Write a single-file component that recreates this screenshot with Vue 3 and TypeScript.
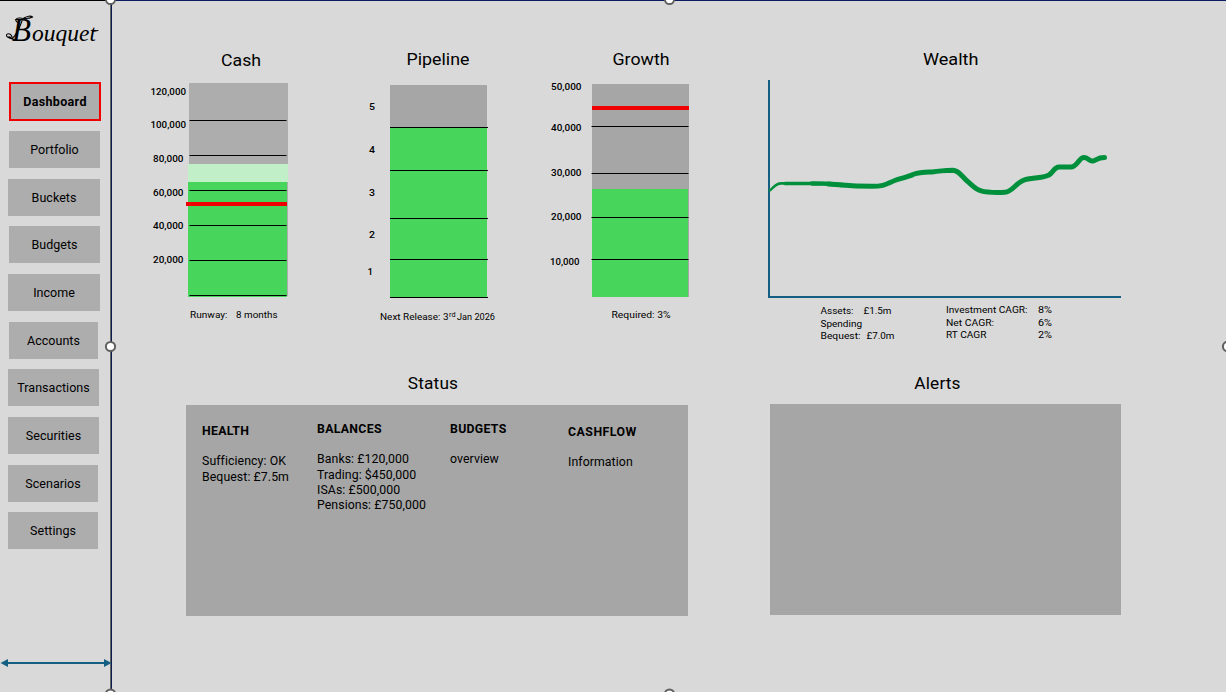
<script setup lang="ts">
interface Label { text: string; x: number; y: number; w: number }
interface Column { title: string; lines: string[]; name: string }

const nav: { label: string; size: string }[] = [
  { label: 'Portfolio', size: 'inset' },
  { label: 'Buckets', size: 'wide' },
  { label: 'Budgets', size: 'inset' },
  { label: 'Income', size: 'wide' },
  { label: 'Accounts', size: 'short' },
  { label: 'Transactions', size: 'mid' },
  { label: 'Securities', size: 'mid' },
  { label: 'Scenarios', size: 'base' },
  { label: 'Settings', size: 'base' },
]

const cashLabels: Label[] = [
  { text: '120,000', x: 150.5, y: 95, w: 35.5 },
  { text: '100,000', x: 150.5, y: 128, w: 35.5 },
  { text: '80,000', x: 153, y: 162, w: 30.5 },
  { text: '60,000', x: 153, y: 196, w: 30.5 },
  { text: '40,000', x: 153, y: 229, w: 30.5 },
  { text: '20,000', x: 153, y: 263, w: 30.5 },
]
const cashLines: number[] = [120, 155, 190, 225, 260, 295]

const pipelineLabels: Label[] = [
  { text: '5', x: 369, y: 110, w: 6 },
  { text: '4', x: 369, y: 153, w: 6 },
  { text: '3', x: 369, y: 196, w: 6 },
  { text: '2', x: 369, y: 238, w: 6 },
  { text: '1', x: 367.5, y: 275, w: 5.5 },
]
const pipelineLines: number[] = [127, 170, 218, 259, 297]

const growthLabels: Label[] = [
  { text: '50,000', x: 551, y: 90, w: 30.5 },
  { text: '40,000', x: 551, y: 131, w: 30.5 },
  { text: '30,000', x: 551, y: 176, w: 30.5 },
  { text: '20,000', x: 551, y: 220, w: 30.5 },
  { text: '10,000', x: 550, y: 265, w: 29.5 },
]
const growthLines: number[] = [126, 173, 217, 259]

const wealthNotes: Label[] = [
  { text: 'Assets:', x: 820.5, y: 314, w: 33 },
  { text: '£1.5m', x: 863.5, y: 314, w: 28 },
  { text: 'Spending', x: 820.5, y: 327, w: 41.5 },
  { text: 'Bequest:', x: 820.5, y: 339, w: 40 },
  { text: '£7.0m', x: 866.5, y: 339, w: 28 },
  { text: 'Investment CAGR:', x: 946, y: 313, w: 81.5 },
  { text: 'Net CAGR:', x: 946, y: 326, w: 48 },
  { text: 'RT CAGR', x: 946, y: 338, w: 40.5 },
  { text: '8%', x: 1038, y: 313, w: 14 },
  { text: '6%', x: 1038, y: 326, w: 14 },
  { text: '2%', x: 1038, y: 338, w: 14 },
]

const columns: Column[] = [
  { name: 'health', title: 'HEALTH', lines: ['Sufficiency: OK', 'Bequest: £7.5m'] },
  { name: 'balances', title: 'BALANCES', lines: ['Banks: £120,000', 'Trading: $450,000', 'ISAs: £500,000', 'Pensions: £750,000'] },
  { name: 'budgets', title: 'BUDGETS', lines: ['overview'] },
  { name: 'cashflow', title: 'CASHFLOW', lines: ['Information'] },
]

const handles: { x: number; y: number }[] = [
  { x: 110.5, y: -0.5 },
  { x: 669.5, y: -0.5 },
  { x: 110.5, y: 346.5 },
  { x: 1227.5, y: 346.5 },
  { x: 110.5, y: 694 },
  { x: 669.5, y: 694 },
]
</script>

<template>
  <div class="app">
    <aside class="sidebar">
      <svg class="logo" width="110" height="56" viewBox="0 0 110 56">
        <text class="script initial" x="12" y="40" textLength="19" lengthAdjust="spacingAndGlyphs">B</text>
        <text class="script" x="32" y="39.500" textLength="64" lengthAdjust="spacingAndGlyphs">ouquet</text>
        <path class="flourish" d="M18 21.500C14 20 16 16.500 20 17S28 18.500 32.500 16C31 14.500 27 15 24 17" />
        <path class="flourish" d="M16 39C11 37.500 6.500 37 6.500 34.500S10 32.500 11.500 34.500S9.500 37 9 35.500M12 37.500Q17 34 22 20" />
        <path class="flourish" d="M92.500 30.500L98 29.500" />
      </svg>
      <nav class="nav">
        <button class="item active">Dashboard</button>
        <button v-for="n in nav" :key="n.label" class="item" :class="n.size">{{ n.label }}</button>
      </nav>
      <svg class="extent" width="112" height="12" viewBox="0 0 112 12">
        <path d="M7 6H105" stroke="#156082" stroke-width="2" />
        <path d="M0.500 6L8 2V10ZM111.500 6L104 2V10Z" fill="#156082" />
      </svg>
    </aside>

    <main class="main">
      <div class="charts">
        <svg width="200" height="310" viewBox="140 40 200 310">
          <text class="title" x="221" y="66" textLength="40" lengthAdjust="spacingAndGlyphs">Cash</text>
          <rect x="189" y="83" width="99" height="213" fill="#adadad" />
          <rect x="188" y="164" width="100" height="18" fill="#c1f0c8" />
          <rect x="188" y="182" width="99" height="115" fill="#47d65b" />
          <rect v-for="y in cashLines" :key="y" x="189.500" :y="y" width="97" height="1" />
          <rect x="186" y="202" width="101" height="4" fill="#f00000" />
          <text v-for="l in cashLabels" :key="l.text" class="tick" :x="l.x" :y="l.y" :textLength="l.w" lengthAdjust="spacingAndGlyphs">{{ l.text }}</text>
          <text class="note" x="190" y="318" textLength="37.500" lengthAdjust="spacingAndGlyphs">Runway:</text>
          <text class="note" x="236" y="318" textLength="41.500" lengthAdjust="spacingAndGlyphs">8 months</text>
        </svg>

        <svg width="200" height="310" viewBox="340 40 200 310">
          <text class="title" x="406.500" y="65" textLength="63" lengthAdjust="spacingAndGlyphs">Pipeline</text>
          <rect x="390" y="85" width="97" height="42" fill="#a6a6a6" />
          <rect x="390" y="127" width="97" height="170" fill="#47d65b" />
          <rect v-for="y in pipelineLines" :key="y" x="390" :y="y" width="98" height="1" />
          <text v-for="l in pipelineLabels" :key="l.text" class="tick" :x="l.x" :y="l.y" :textLength="l.w" lengthAdjust="spacingAndGlyphs">{{ l.text }}</text>
          <text class="note" x="380" y="320" textLength="68.500" lengthAdjust="spacingAndGlyphs">Next Release: 3</text>
          <text class="note sup" x="449" y="317" textLength="6.500" lengthAdjust="spacingAndGlyphs">rd</text>
          <text class="note" x="457" y="320" textLength="38" lengthAdjust="spacingAndGlyphs">Jan 2026</text>
        </svg>

        <svg width="200" height="310" viewBox="540 40 200 310">
          <text class="title" x="612.500" y="65" textLength="57" lengthAdjust="spacingAndGlyphs">Growth</text>
          <rect x="592" y="84" width="97" height="213" fill="#a6a6a6" />
          <rect x="592" y="189" width="96" height="108" fill="#47d65b" />
          <rect v-for="y in growthLines" :key="y" x="591.500" :y="y" width="97" height="1" />
          <rect x="592" y="106" width="97" height="4" fill="#f00000" />
          <text v-for="l in growthLabels" :key="l.text" class="tick" :x="l.x" :y="l.y" :textLength="l.w" lengthAdjust="spacingAndGlyphs">{{ l.text }}</text>
          <text class="note" x="611.500" y="318" textLength="59" lengthAdjust="spacingAndGlyphs">Required: 3%</text>
        </svg>

        <svg width="400" height="310" viewBox="740 40 400 310">
          <text class="title" x="923" y="65" textLength="55.500" lengthAdjust="spacingAndGlyphs">Wealth</text>
          <path d="M769 80V297H1121" fill="none" stroke="#156082" stroke-width="2" />
          <g class="trend">
            <path stroke-width="2.600" d="M770 190.300C774 187 776 183.600 781 183.400L800 183.500" />
            <path stroke-width="3.600" d="M785 183.500L823 183.500C830 183.700 836 184.500 842 185" />
            <path stroke-width="4.300" d="M812 183.500L823 183.600C830 183.700 836 184.500 842 185" />
            <path stroke-width="5" d="M828 183.900C840 184.600 850 186.300 872 186.300C885 186.300 886 184 896 180C902 178 908 177 913 174.500C920 172 923 172.200 932 172C940 170.800 947 170.500 953 170.300C958 170.500 961 175 966 180C972 185 976 190 981 190.800C987 192.500 998 192.500 1005 192.200C1012 192 1015 184 1023 180.500C1031 177 1040 179 1049 175C1054 172 1054 167 1059 167H1071C1077 167 1079 157.500 1084 157.500C1088 157.500 1089 161.500 1093 161C1097 160 1097 157.500 1104.500 157.500" />
          </g>
          <text v-for="(l, i) in wealthNotes" :key="i" class="note" :x="l.x" :y="l.y" :textLength="l.w" lengthAdjust="spacingAndGlyphs">{{ l.text }}</text>
        </svg>
      </div>

      <div class="boards">
        <section class="board status">
          <h2>Status</h2>
          <div class="panel columns">
            <div v-for="c in columns" :key="c.name" class="column" :class="c.name">
              <h3>{{ c.title }}</h3>
              <p v-for="line in c.lines" :key="line">{{ line }}</p>
            </div>
          </div>
        </section>
        <section class="board alerts">
          <h2>Alerts</h2>
          <div class="panel"></div>
        </section>
      </div>
    </main>

    <svg class="handles" width="1226" height="692" viewBox="0 0 1226 692">
      <circle v-for="(h, i) in handles" :key="i" :cx="h.x" :cy="h.y" r="4.600" />
    </svg>
  </div>
</template>

<style>
body { margin: 0; overflow: hidden; }
</style>

<style scoped>
.app {
  position: relative;
  display: flex;
  width: 1226px;
  height: 692px;
  overflow: hidden;
  background: #d9d9d9;
  color: #000;
  font-family: Roboto, "Liberation Sans", sans-serif;
}
.sidebar {
  box-sizing: border-box;
  display: flex;
  flex-direction: column;
  width: 112px;
  flex: none;
  border-top: 1px solid #000;
  box-shadow: inset -1px 0 #0b1c4d, inset -2px 0 #666;
}
.logo { display: block; }
.script { font: italic 24px "Liberation Serif", serif; }
.initial { font-size: 33px; }
.flourish { fill: none; stroke: #000; stroke-width: 1.1; stroke-linecap: round; }
.nav {
  display: flex;
  flex-direction: column;
  align-items: flex-start;
  gap: 10.67px;
  margin-top: 25px;
  padding-left: 8px;
}
.item {
  width: 90px;
  height: 37px;
  flex: none;
  padding: 0;
  border: 0;
  background: #adadad;
  color: #000;
  font: 400 12.5px Roboto, sans-serif;
  letter-spacing: 0.03px;
}
.active {
  width: 92px;
  height: 39px;
  margin: 0 0 -0.65px 1px;
  border: 2px solid #f00000;
  font-weight: 700;
  letter-spacing: 0.35px;
}
.wide { width: 92px; }
.mid { width: 91px; }
.inset { width: 91px; margin-left: 1px; }
.short { width: 89px; margin-left: 1px; }
.extent { display: block; margin-top: 108px; }
.main {
  box-sizing: border-box;
  flex: 1;
  padding: 39px 0 0 28px;
  border-top: 1px solid #0b1c60;
}
.charts { display: flex; height: 310px; }
.charts svg { display: block; flex: none; }
.title { font-size: 17.3px; }
.tick { font-size: 9.5px; font-weight: 500; }
.note { font-size: 9.6px; }
.sup { font-size: 6.3px; }
.trend { fill: none; stroke: #00903c; stroke-linecap: round; stroke-linejoin: round; }
.boards { display: flex; gap: 82px; padding: 22px 0 0 46px; }
.status { width: 502px; }
.alerts { width: 351px; }
h2 {
  height: 22px;
  margin: 0 0 11px;
  padding-right: 8px;
  text-align: center;
  font-size: 17.3px;
  font-weight: 400;
  line-height: 22px;
  letter-spacing: 0.15px;
}
.alerts h2 { margin-bottom: 10px; padding-right: 16px; }
.panel { box-sizing: border-box; height: 211px; background: #a6a6a6; }
.columns {
  display: grid;
  grid-template-columns: 115px 133px 118px 100px;
  padding: 17px 0 0 16px;
}
.column.health { padding-top: 2px; }
.column.cashflow { padding-top: 3px; }
h3 {
  margin: 0 0 15px;
  font-size: 12.3px;
  font-weight: 700;
  line-height: 15.3px;
  letter-spacing: 0.3px;
}
.cashflow h3 { letter-spacing: 0.5px; }
p {
  margin: 0;
  font-size: 12.3px;
  line-height: 15.3px;
  letter-spacing: 0.08px;
  white-space: nowrap;
}
.handles { position: absolute; inset: 0; pointer-events: none; }
.handles circle { fill: #fff; stroke: #606060; stroke-width: 2; }
</style>
